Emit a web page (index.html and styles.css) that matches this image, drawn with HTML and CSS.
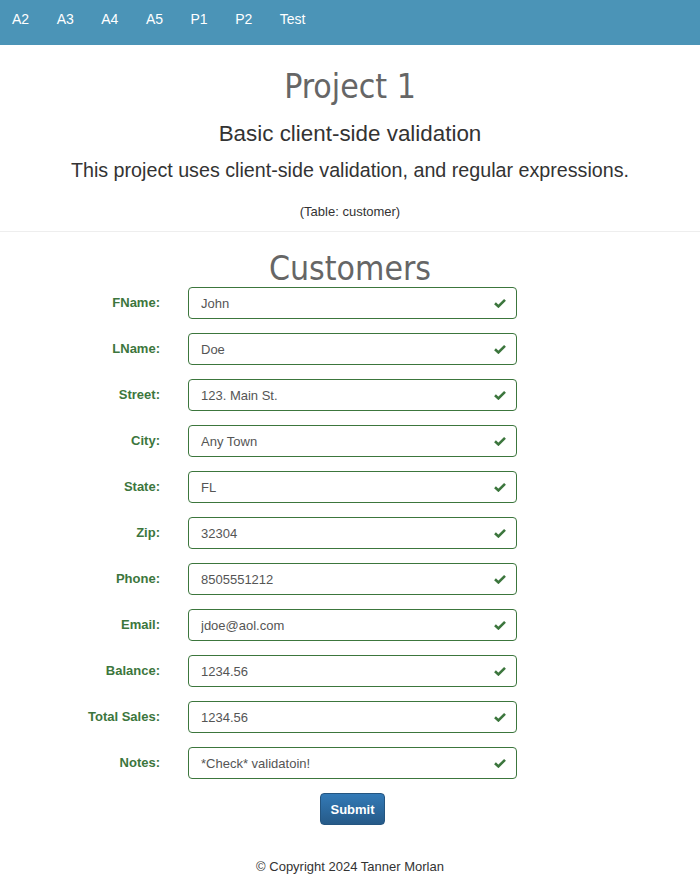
FILE: index.html
```html
<!DOCTYPE html>
<html lang="en">
<head>
<meta charset="utf-8">
<title>Project 1</title>
<link rel="stylesheet" href="styles.css">
</head>
<body>
<nav class="navbar">
  <a href="#">A2</a>
  <a href="#">A3</a>
  <a href="#">A4</a>
  <a href="#">A5</a>
  <a href="#">P1</a>
  <a href="#">P2</a>
  <a href="#">Test</a>
</nav>
<header class="page-header">
  <h1 class="title">Project 1</h1>
  <h2 class="subtitle">Basic client-side validation</h2>
  <p class="lead">This project uses client-side validation, and regular expressions.</p>
  <p class="table-note">(Table: customer)</p>
</header>
<main class="content">
  <h2 class="section-title">Customers</h2>
  <form class="form">
    <label class="form-label">FName:</label>
    <div class="field"><input class="input" value="John"><svg class="check" viewBox="0 0 12 10"><path d="M1 5.2 L4.4 8.4 L11 1.8" /></svg></div>
    <label class="form-label">LName:</label>
    <div class="field"><input class="input" value="Doe"><svg class="check" viewBox="0 0 12 10"><path d="M1 5.2 L4.4 8.4 L11 1.8" /></svg></div>
    <label class="form-label">Street:</label>
    <div class="field"><input class="input" value="123. Main St."><svg class="check" viewBox="0 0 12 10"><path d="M1 5.2 L4.4 8.4 L11 1.8" /></svg></div>
    <label class="form-label">City:</label>
    <div class="field"><input class="input" value="Any Town"><svg class="check" viewBox="0 0 12 10"><path d="M1 5.2 L4.4 8.4 L11 1.8" /></svg></div>
    <label class="form-label">State:</label>
    <div class="field"><input class="input" value="FL"><svg class="check" viewBox="0 0 12 10"><path d="M1 5.2 L4.4 8.4 L11 1.8" /></svg></div>
    <label class="form-label">Zip:</label>
    <div class="field"><input class="input" value="32304"><svg class="check" viewBox="0 0 12 10"><path d="M1 5.2 L4.4 8.4 L11 1.8" /></svg></div>
    <label class="form-label">Phone:</label>
    <div class="field"><input class="input" value="8505551212"><svg class="check" viewBox="0 0 12 10"><path d="M1 5.2 L4.4 8.4 L11 1.8" /></svg></div>
    <label class="form-label">Email:</label>
    <div class="field"><input class="input" value="jdoe@aol.com"><svg class="check" viewBox="0 0 12 10"><path d="M1 5.2 L4.4 8.4 L11 1.8" /></svg></div>
    <label class="form-label">Balance:</label>
    <div class="field"><input class="input" value="1234.56"><svg class="check" viewBox="0 0 12 10"><path d="M1 5.2 L4.4 8.4 L11 1.8" /></svg></div>
    <label class="form-label">Total Sales:</label>
    <div class="field"><input class="input" value="1234.56"><svg class="check" viewBox="0 0 12 10"><path d="M1 5.2 L4.4 8.4 L11 1.8" /></svg></div>
    <label class="form-label">Notes:</label>
    <div class="field"><input class="input" value="*Check* validatoin!"><svg class="check" viewBox="0 0 12 10"><path d="M1 5.2 L4.4 8.4 L11 1.8" /></svg></div>
    <div></div>
    <div class="actions"><button type="button" class="btn">Submit</button></div>
  </form>
</main>
<footer class="footer">© Copyright 2024 Tanner Morlan</footer>
</body>
</html>
```
FILE: styles.css
```css
* { box-sizing: border-box; }
body {
  margin: 0;
  font-family: "Liberation Sans", Arial, sans-serif;
  font-size: 13px;
  color: #333;
  background: #fff;
}
.navbar {
  height: 45px;
  background: #4b94b7;
  display: flex;
  align-items: center;
  padding-left: 12px;
  gap: 27.5px;
  padding-bottom: 8px;
}
.navbar a {
  color: #fff;
  text-decoration: none;
  font-size: 14px;
}
.page-header {
  text-align: center;
  border-bottom: 1px solid #eee;
  padding-top: 22px;
  padding-bottom: 10px;
}
.title {
  margin: 0;
  font-family: "DejaVu Sans Condensed", "DejaVu Sans", sans-serif;
  font-stretch: condensed;
  font-weight: normal;
  font-size: 33.5px;
  color: #666;
  line-height: 40px;
}
.subtitle {
  margin: 12px 0 0;
  font-weight: normal;
  font-size: 22.4px;
  line-height: 30px;
  color: #333;
}
.lead {
  margin: 7px 0 0;
  font-size: 19.7px;
  line-height: 28px;
}
.table-note {
  margin: 19px 0 0;
  font-size: 13px;
  line-height: 18px;
}
.content { padding-top: 17px; }
.section-title {
  margin: 0;
  text-align: center;
  font-family: "DejaVu Sans Condensed", "DejaVu Sans", sans-serif;
  font-stretch: condensed;
  font-weight: normal;
  font-size: 33.5px;
  color: #666;
  line-height: 40px;
}
.form {
  display: grid;
  grid-template-columns: 160px 329px;
  column-gap: 28px;
  row-gap: 14px;
  margin-top: -2px;
}
.form-label {
  text-align: right;
  font-weight: bold;
  color: #3c763d;
  padding-top: 7px;
  line-height: 18px;
}
.field { position: relative; }
.input {
  display: block;
  width: 100%;
  height: 32px;
  border: 1px solid #3c763d;
  border-radius: 4px;
  padding: 0 30px 0 12px;
  font-family: "Liberation Sans", Arial, sans-serif;
  font-size: 13px;
  color: #555;
  background: #fff;
}
.check {
  position: absolute;
  right: 11px;
  top: 11px;
  width: 12px;
  height: 10px;
  fill: none;
  stroke: #3c763d;
  stroke-width: 2.6;
}
.actions {
  display: flex;
  padding-left: 132px;
}
.btn {
  font-family: "Liberation Sans", Arial, sans-serif;
  font-size: 13px;
  font-weight: bold;
  color: #fff;
  background: linear-gradient(#337ab7, #265a88);
  border: 1px solid #245580;
  border-radius: 4px;
  width: 65px;
  height: 32px;
  padding: 0;
}
.footer {
  text-align: center;
  padding-top: 34px;
}
```
